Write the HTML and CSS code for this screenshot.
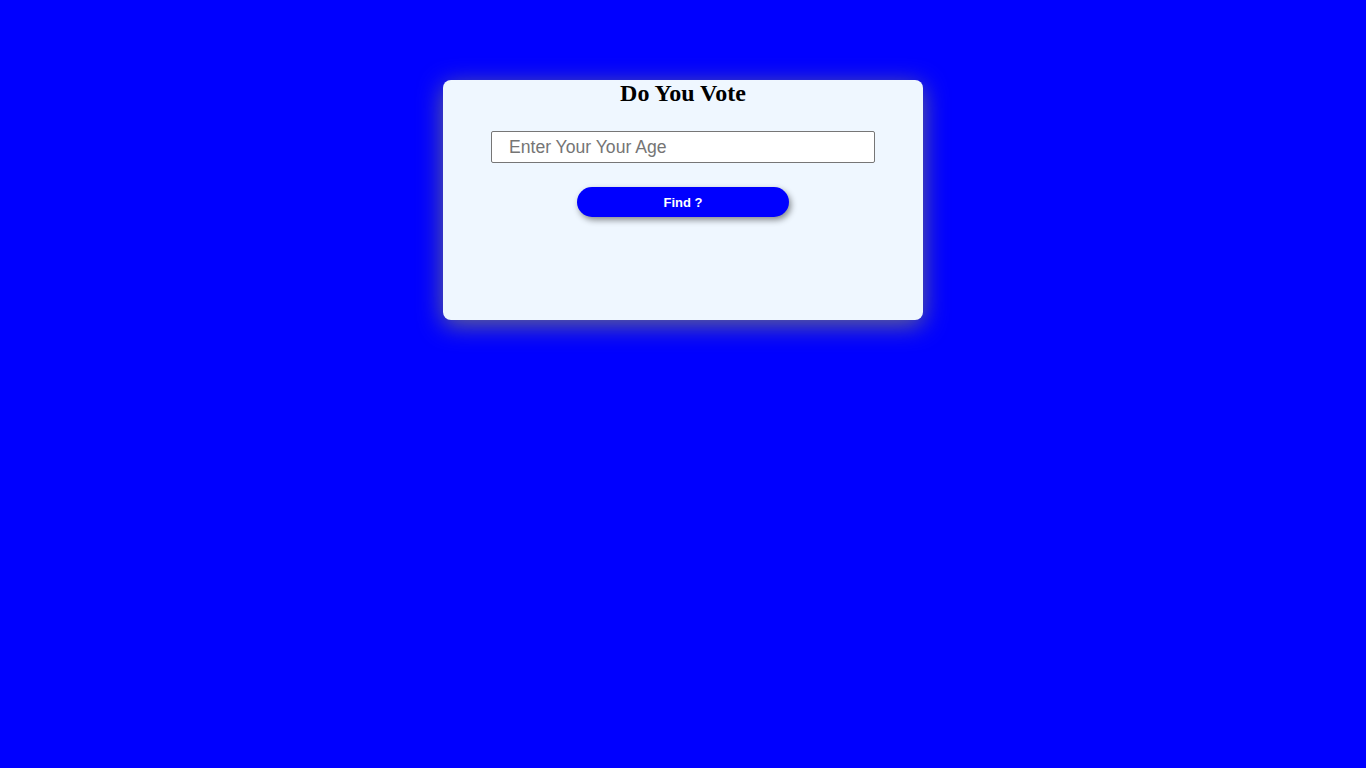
FILE: index.html
```html
<!DOCTYPE html>
<html>
<head>
<meta charset="utf-8">
<link rel="stylesheet" href="styles.css">
</head>
<body>
<div class="card">
  <h2 class="title">Do You Vote</h2>
  <input class="age" type="text" placeholder="Enter Your Your Age">
  <button class="find">Find ?</button>
</div>
</body>
</html>
```
FILE: styles.css
```css
html, body {
  margin: 0;
  padding: 0;
  background: #0000ff;
  height: 100%;
}
body {
  padding-top: 80px;
  box-sizing: border-box;
}
.card {
  width: 480px;
  height: 240px;
  margin: 0 auto;
  background: #eff7ff;
  border-radius: 8px;
  box-shadow: 0 5px 25px rgba(110, 110, 130, 0.95);
  display: flex;
  flex-direction: column;
  align-items: center;
  box-sizing: border-box;
}
.title {
  font-family: "Liberation Serif", serif;
  font-weight: bold;
  font-size: 24px;
  margin: 0;
  line-height: 27px;
  color: #000;
}
.age {
  margin-top: 24px;
  width: 384px;
  height: 32px;
  box-sizing: border-box;
  border: 1px solid #767676;
  border-radius: 2px;
  padding: 0 0 0 17px;
  font-family: "Liberation Sans", Arial, sans-serif;
  font-size: 17.6px;
  background: #fff;
  outline: none;
}
.age::placeholder {
  color: #757575;
}
.find {
  margin-top: 24px;
  width: 212px;
  height: 30px;
  border: none;
  border-radius: 15px;
  background: #0000ff;
  color: #fff;
  font-family: "Liberation Sans", Arial, sans-serif;
  font-weight: bold;
  font-size: 13px;
  box-shadow: 2px 3px 6px rgba(0, 0, 0, 0.45);
  cursor: pointer;
}
```
